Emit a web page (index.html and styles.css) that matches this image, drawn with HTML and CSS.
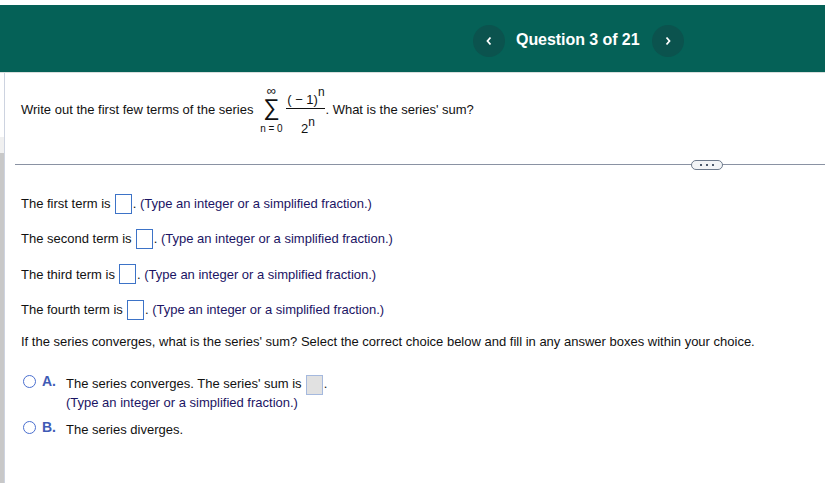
FILE: index.html
```html
<!DOCTYPE html>
<html lang="en">
<head>
  <meta charset="UTF-8" />
  <title>Question 3 of 21</title>
  <link rel="stylesheet" href="styles.css">
</head>
<body>
  <header class="topbar">
    <nav class="pager">
      <button class="pager-btn"><svg width="8" height="10" viewBox="0 0 8 10"><path d="M5.500 1.500 2.500 5l3 3.500" /></svg></button>
      <h1>Question 3 of 21</h1>
      <button class="pager-btn"><svg width="8" height="10" viewBox="0 0 8 10"><path d="M2.500 1.500 5.500 5l-3 3.500" /></svg></button>
    </nav>
  </header>

  <div class="page">
    <div class="rail">
      <div class="rail-top"></div>
      <div class="rail-mid"></div>
      <div class="rail-end"></div>
    </div>

    <main class="content">
      <div class="prompt">
        <span>Write out the first few terms of the series</span>
        <span class="sigma">
          <span class="sigma-top">∞</span>
          <span class="sigma-sign">∑</span>
          <span class="sigma-bottom">n = 0</span>
        </span>
        <span class="frac">
          <span class="frac-top">( − 1)<sup>n</sup></span>
          <span class="frac-bottom">2<sup>n</sup></span>
        </span>
        <span>. What is the series' sum?</span>
      </div>

      <div class="divider"><span class="more"><i></i><i></i><i></i></span></div>

      <p class="term">The first term is <span class="box"></span>. <span class="hint">(Type an integer or a simplified fraction.)</span></p>
      <p class="term">The second term is <span class="box"></span>. <span class="hint">(Type an integer or a simplified fraction.)</span></p>
      <p class="term">The third term is <span class="box"></span>. <span class="hint">(Type an integer or a simplified fraction.)</span></p>
      <p class="term">The fourth term is <span class="box"></span>. <span class="hint">(Type an integer or a simplified fraction.)</span></p>

      <p class="ask">If the series converges, what is the series' sum? Select the correct choice below and fill in any answer boxes within your choice.</p>

      <div class="choices">
        <div class="choice">
          <span class="radio"></span>
          <span class="letter">A.</span>
          <div class="choice-text">
            <div class="choice-line">The series converges. The series' sum is <span class="box off"></span>.</div>
            <div class="hint">(Type an integer or a simplified fraction.)</div>
          </div>
        </div>
        <div class="choice">
          <span class="radio"></span>
          <span class="letter">B.</span>
          <div class="choice-text">The series diverges.</div>
        </div>
      </div>
    </main>
  </div>
</body>
</html>
```

FILE: styles.css
```css
* {
  box-sizing: border-box;
}

body {
  margin: 0;
  height: 483px;
  overflow: hidden;
  padding-top: 5px;
  font-family: "Liberation Sans", Arial, sans-serif;
  font-size: 13px;
  color: #111;
  background-color: #fff;
}

.topbar {
  height: 68px;
  padding-left: 473px;
  background-color: #056157;
  border-bottom: 1px solid #d9dedd;
}

.pager {
  display: flex;
  align-items: center;
  height: 67px;
  padding-top: 4px;
}

.pager h1 {
  margin: 0 12px 1px 11px;
  font-size: 16px;
  font-weight: bold;
  letter-spacing: -0.06px;
  color: #fff;
  white-space: nowrap;
}

.pager-btn {
  display: flex;
  align-items: center;
  justify-content: center;
  width: 32px;
  height: 32px;
  padding: 0;
  border: none;
  border-radius: 50%;
  background-color: #0b534e;
}

.pager-btn path {
  fill: none;
  stroke: #fff;
  stroke-width: 1.8;
}

.page {
  display: flex;
  height: 410px;
}

.rail {
  display: flex;
  flex-direction: column;
  width: 5px;
  border-right: 1px solid #cdd3e0;
}

.rail-top {
  height: 64px;
}

.rail-mid {
  height: 16px;
  background-color: #f0f0f0;
}

.rail-end {
  flex: 1;
  background-color: #c8c8c8;
}

.content {
  flex: 1;
  padding: 13px 0 0 16px;
}

.prompt {
  display: flex;
  align-items: center;
  height: 46px;
}

.sigma {
  display: flex;
  flex-direction: column;
  align-items: center;
  width: 22px;
  margin: 0 4px 0 7px;
  padding-top: 3px;
  font-size: 10px;
}

.sigma-top {
  font-size: 13px;
  line-height: 10px;
}

.sigma-sign {
  margin-top: 1px;
  font-size: 23px;
  line-height: 21px;
}

.sigma-bottom {
  margin-top: 5px;
  line-height: 12px;
  white-space: nowrap;
}

.frac {
  display: flex;
  flex-direction: column;
  align-items: center;
  width: 39px;
}

.frac-top {
  width: 100%;
  height: 23px;
  padding-top: 6px;
  text-align: center;
  border-bottom: 1px solid #111;
}

.frac-top sup {
  vertical-align: 8px;
}

.frac-bottom {
  height: 23px;
  padding-top: 12px;
  padding-left: 4px;
}

.frac sup {
  font-size: 12px;
  line-height: 0;
}

.frac-bottom sup {
  vertical-align: 7px;
}

.divider {
  position: relative;
  margin: 32px 0 0 -6px;
  height: 1px;
  background-color: #8a92a3;
}

.more {
  position: absolute;
  left: 676px;
  top: -4px;
  display: flex;
  align-items: center;
  justify-content: center;
  gap: 4px;
  width: 32px;
  height: 10px;
  border: 1px solid #6d7a8c;
  border-radius: 5px;
  background-color: #f2f4f6;
}

.more i {
  width: 2px;
  height: 2px;
  background-color: #4d5a6c;
}

.term {
  display: flex;
  align-items: center;
  margin: 0;
  height: 35.300px;
  white-space: pre;
}

.divider + .term {
  margin-top: 21px;
}

.box {
  display: inline-block;
  width: 17px;
  height: 20px;
  margin: 0 1px 0 0.500px;
  border: 1px solid #3d73c7;
  vertical-align: middle;
}

.box.off {
  background-color: #e1e1e1;
  border-color: #a5b9de;
}

.hint {
  color: #1b1464;
}

.ask {
  margin: 7px 0 0;
}

.choices {
  margin-top: 24px;
}

.choice {
  display: flex;
  align-items: flex-start;
  margin-bottom: 7px;
}

.radio {
  width: 13px;
  height: 13px;
  margin: 2px 0 0 2px;
  border: 1.500px solid #4a6fcf;
  border-radius: 50%;
}

.letter {
  width: 30px;
  margin-top: 1px;
  padding-left: 6px;
  font-size: 14px;
  font-weight: bold;
  line-height: 14px;
  color: #3f5bb5;
}

.choice-text {
  margin-top: 1px;
  line-height: 19px;
}

.choice-line {
  height: 19px;
}
```
